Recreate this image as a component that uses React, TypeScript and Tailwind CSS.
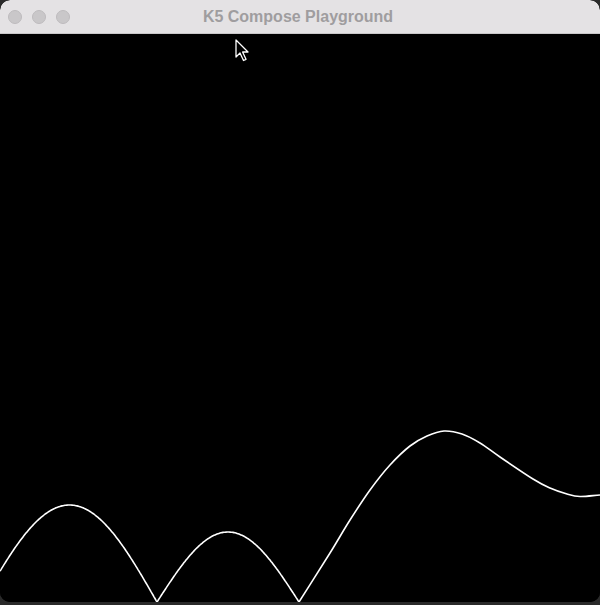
import React from "react";

function buildPath(): string {
  const pts: [number, number][] = [];
  for (let x = 0; x <= 157; x += 1) {
    const y = 602 - 97 * Math.sin((Math.PI * (x + 18)) / 175);
    pts.push([x, y]);
  }
  for (let x = 158; x <= 299; x += 1) {
    const y = 602 - 70 * Math.sin((Math.PI * (x - 157)) / 142);
    pts.push([x, y]);
  }
  const k: [number, number][] = [
    [299, 602],
    [330, 553],
    [350, 520],
    [370, 490],
    [390, 465],
    [410, 446],
    [427, 436],
    [444, 431],
    [462, 434],
    [480, 443],
    [500, 457],
    [533, 479],
    [550, 488],
    [567, 494],
    [580, 496.5],
    [600, 495],
  ];
  let d = "M " + pts.map((p) => p[0].toFixed(1) + " " + p[1].toFixed(1)).join(" L ");
  for (let i = 0; i < k.length - 1; i++) {
    const p0 = i === 0 ? [k[0][0] - (k[1][0] - k[0][0]), k[0][1] - (k[1][1] - k[0][1])] : k[i - 1];
    const p1 = k[i];
    const p2 = k[i + 1];
    const p3 = i + 2 < k.length ? k[i + 2] : [p2[0] + (p2[0] - p1[0]), p2[1] + (p2[1] - p1[1])];
    const c1x = p1[0] + (p2[0] - p0[0]) / 6;
    const c1y = p1[1] + (p2[1] - p0[1]) / 6;
    const c2x = p2[0] - (p3[0] - p1[0]) / 6;
    const c2y = p2[1] - (p3[1] - p1[1]) / 6;
    d += ` C ${c1x.toFixed(1)} ${c1y.toFixed(1)} ${c2x.toFixed(1)} ${c2y.toFixed(1)} ${p2[0]} ${p2[1]}`;
  }
  return d;
}

export default function App() {
  const d = buildPath();
  return (
    <div className="relative w-[600px] h-[605px] bg-[#2a2a2a] overflow-hidden" style={{ fontFamily: "'Liberation Sans', Arial, sans-serif" }}>
      <div className="flex flex-col w-[600px] h-[602px] bg-black rounded-[10px] overflow-hidden">
        <div className="relative flex items-center h-[34px] shrink-0 bg-[#e4e2e4] border-b border-[#c9c7c9] rounded-t-[10px]">
          <div className="flex items-center gap-[10px] pl-[8px]">
            <span className="block w-[14px] h-[14px] rounded-full bg-[#c9c7c9] border border-[#bdbbbd]" />
            <span className="block w-[14px] h-[14px] rounded-full bg-[#c9c7c9] border border-[#bdbbbd]" />
            <span className="block w-[14px] h-[14px] rounded-full bg-[#c9c7c9] border border-[#bdbbbd]" />
          </div>
          <div className="absolute inset-0 flex items-center justify-center text-[16px] font-bold text-[#9f9d9f] pr-[4px]">
            K5 Compose Playground
          </div>
        </div>
        <div className="relative flex-1 bg-black">
          <svg className="absolute left-0 top-[-34px]" width="600" height="605" viewBox="0 0 600 605">
            <path d={d} fill="none" stroke="#ffffff" strokeWidth="1.6" strokeLinejoin="round" />
          </svg>
          <svg className="absolute left-[235px] top-[5px]" width="16" height="24" viewBox="0 0 16 24">
            <path d="M1 1 L1 18 L5 14 L8.5 21.5 L11 20.3 L7.6 13 L13 13 Z" fill="#000" stroke="#fff" strokeWidth="1.3" strokeLinejoin="round" />
          </svg>
        </div>
      </div>
    </div>
  );
}
